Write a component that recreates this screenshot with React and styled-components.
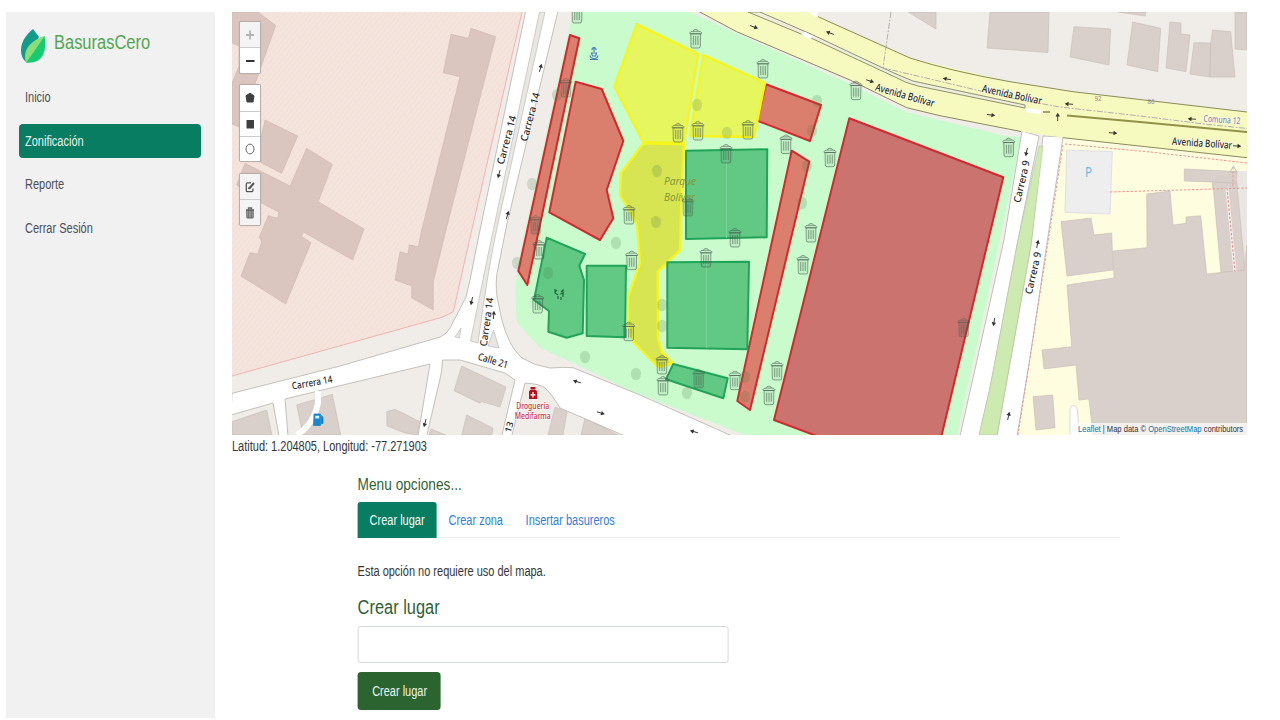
import React from "react";
import styled, { createGlobalStyle } from "styled-components";

const GlobalStyle = createGlobalStyle`
  * { box-sizing: border-box; }
  body {
    margin: 0;
    background: #fff;
    font-family: "Liberation Sans", Arial, sans-serif;
    overflow: hidden;
  }
`;

const Page = styled.div`
  display: flex;
  width: 1280px;
  height: 720px;
  padding: 12px 33px 2px 6px;
`;

const Sidebar = styled.aside`
  width: 209px;
  flex: none;
  height: 706px;
  background: #f1f1f1;
  padding: 16px 13px;
`;

const Brand = styled.div`
  display: flex;
  align-items: center;
  height: 36px;
  padding-left: 2px;
  gap: 8px;
`;

const BrandIcon = styled.svg`
  width: 25px;
  height: 36px;
  flex: none;
`;

const Narrow = styled.span`
  display: inline-block;
  white-space: nowrap;
  transform: scaleX(${(p) => p.$x || 0.785});
  transform-origin: ${(p) => p.$origin || "left"} center;
`;

const BrandName = styled.div`
  font-size: 20px;
  line-height: 24px;
  color: #53a653;
  margin-top: -8px;
`;

const Nav = styled.nav`
  display: flex;
  flex-direction: column;
  gap: 9px;
  margin-top: 16px;
`;

const NavItem = styled.a`
  height: 34.7px;
  line-height: 35px;
  padding-left: 6px;
  width: 182px;
  border-radius: 4px;
  font-size: 14px;
  color: ${(p) => (p.$active ? "#e9f5f1" : "#4c4f56")};
  background: ${(p) => (p.$active ? "#087d62" : "transparent")};
`;

const Main = styled.main`
  padding-left: 17px;
  width: 1032px;
`;

const MapFrame = styled.section`
  position: relative;
  width: 1015px;
  height: 423px;
  overflow: hidden;
`;

const MapCanvas = styled.svg`
  display: block;
  width: 1015px;
  height: 423px;
`;

const Controls = styled.div`
  position: absolute;
  left: 7px;
  top: 9px;
  display: flex;
  flex-direction: column;
  gap: 10.5px;
`;

const ControlGroup = styled.div`
  width: 22px;
  border: 1px solid #b9aeaa;
  border-radius: 2px;
  overflow: hidden;
  box-shadow: 0 0 1px rgba(0, 0, 0, 0.25);
`;

const ControlButton = styled.div`
  height: 25.4px;
  display: flex;
  align-items: center;
  justify-content: center;
  background: ${(p) => (p.$disabled ? "#f5f4f4" : "#fff")};
  & + & { border-top: 1px solid #ccc; }
  svg { width: 14px; height: 16px; display: block; }
`;

const Attribution = styled.div`
  position: absolute;
  right: 0;
  bottom: 0;
  width: 171px;
  height: 12px;
  line-height: 12px;
  padding-left: 2px;
  font-size: 9px;
  color: #333;
  background: rgba(255, 255, 255, 0.7);
  b { font-weight: 400; color: #0a78a8; }
`;

const Coordinates = styled.div`
  font-size: 14px;
  line-height: 20px;
  color: #33373b;
  margin-top: 1px;
`;

const Options = styled.section`
  margin: 18px 0 0 126.4px;
  width: 762px;
  transform: translateX(-0.4px);
`;

const MenuTitle = styled.h2`
  margin: 0;
  font-size: 17px;
  font-weight: 400;
  line-height: 22px;
  color: #34623a;
`;

const Tabs = styled.div`
  display: flex;
  height: 36px;
  margin-top: 6px;
  border-bottom: 1px solid #e8ebe8;
`;

const Tab = styled.div`
  width: ${(p) => p.$w}px;
  height: 36px;
  padding-left: 11.8px;
  line-height: 36px;
  font-size: 14px;
  border-radius: 3px 3px 0 0;
  color: ${(p) => (p.$active ? "#f1fbf7" : "#2f7fe0")};
  background: ${(p) => (p.$active ? "#087d62" : "transparent")};
`;

const Hint = styled.p`
  margin: 23px 0 0;
  font-size: 14px;
  line-height: 20px;
  color: #33373b;
`;

const FormTitle = styled.h3`
  margin: 14px 0 0;
  font-size: 20px;
  font-weight: 400;
  line-height: 24px;
  color: #2f6135;
`;

const Field = styled.input`
  display: block;
  width: 371px;
  height: 37px;
  margin-top: 7px;
  border: 1px solid #d5d8dc;
  border-radius: 3px;
  background: #fff;
`;

const Submit = styled.button`
  display: flex;
  align-items: center;
  justify-content: center;
  width: 82.5px;
  height: 38px;
  margin-top: 9px;
  padding: 0;
  border: 0;
  border-radius: 3.5px;
  background: #2c642f;
  color: #edf5ed;
  font-family: inherit;
  font-size: 14px;
`;

const campusBuildings = [
  "232,12 258,12 275.7,25.5 255,84 247,130 232,124 232,83 239,66 239,46 232,43",
  "265,120 297.7,136 281.7,173.3 256,160",
  "306.7,148.3 332.3,164.3 318.3,201.7 364,229 352.7,260 303.5,232 301.5,236.5 311,242.7 285.7,304 241,276 250,252.7 257.7,254 261.7,241.7 259.3,236.7 268.3,215.7 277.7,218.3 279,212.3 261.7,203 236.7,185 245,163.3 290,186",
  "451,34.3 468.3,38.3 471,28.3 495.7,36.7 446,230 433.3,281.7 433.3,310 411.7,298 411.7,286 395,280 400,251.7 408,254 409.3,245 418.3,246.7 421.7,230 460,76.7 443.3,72.7",
];

const cityBuildings = [
  "232,421.7 266.7,410 272,435 232,435",
  "296.7,405 332.3,394.3 340.7,435 303,435",
  "386.7,411.7 395,409.3 420,421.7 417,435 405,433 387,426",
  "431,429 446,435 429,435",
  "461.7,366 506,387 500,407 481.7,401.7 480,403.3 454,390.7",
  "466.7,415 493,428 492,435 461.7,435",
  "555,407 567,412 563,435 548,435",
  "585,418 618,435 581,435",
  "908,12 936,12 936,29",
  "990,12 1049,12 1048,52.5 987,48",
  "1074,26.7 1110.7,29 1109,65 1070,57",
  "1118,12 1146,12 1145,16",
  "1132.7,22 1160.7,28.3 1157.7,71.7 1127,65",
  "1170,22 1181,23 1181,34 1190,35 1186,71.7 1166,68",
  "1194,42.7 1210.7,43 1210,77 1190,74",
  "1210.7,43 1212.7,30 1230.7,31.7 1235,77 1210,77",
  "1235,12 1247,12 1247,50 1235,49",
  "1184.3,169 1237,171.5 1237,188 1212.7,188 1212.7,182 1184.3,181",
  "1212.7,182 1237,183 1245,271.7 1221,273",
  "1146.7,194 1170,191 1173,225 1186,223.3 1186,217 1200.7,215.7 1206.7,274 1244,270 1247,245 1247,435 1093,435 1089,399 1079,400 1076,365 1044,369 1042,350 1071.7,346.7 1067,285 1114,278 1113,251 1147,247.7",
  "1061,221.7 1091,218 1094,235 1111.7,233 1113,270 1067,276",
  "1033,396.7 1052.7,395 1055,427.7 1036,430",
];

const zones = {
  red: [
    "570,35 579.3,38.3 527.3,285 518.3,271",
    "575.7,81.7 601.7,89 623.3,141 606.7,190 613.3,218.3 600,240 549.3,212.3",
    "766,84.3 821,105 810,141 757.3,120.7",
    "791.7,150.7 809.3,161.7 750,410 737.3,401",
  ],
  deepRed: ["849.3,118.3 1003.3,177.3 941,438 822,438 774,420"],
  yellow: [
    "636.7,24.3 698.3,54 684,143.3 643.3,142.3 614.3,86.7",
    "703.3,55 765,83 754,137 690,136",
  ],
  olive: [
    "643.3,143.3 684,144.3 681.7,190 680,250 657.7,271.7 658,338 662,352 673,363 658,367 633,341.7 628,325 628,297 640,263 637,225 630,212 620,195 621,173",
  ],
  green: [
    "686,150.7 767.3,149.3 766.7,237.3 686,239",
    "667.3,262.3 749,261.7 747.3,349.3 667.3,347.7",
    "546.7,237.7 585,254 579.3,265.7 584,280 582.7,333.3 566.7,337.7 548.3,331.7 549,311 534,300",
    "586.7,265.7 626,265.7 625,337.3 586.7,336",
    "673.3,364 727.7,378.3 723.3,398.3 666,379.3",
  ],
};

const zoneStyle = {
  red: { fill: "#da7f6d", stroke: "#d5282e", strokeWidth: 2 },
  deepRed: { fill: "#cb736f", stroke: "#d5282e", strokeWidth: 2 },
  yellow: { fill: "#e6f65e", stroke: "#f6f51c", strokeWidth: 2.4 },
  olive: { fill: "#d8e552", stroke: "#f6f51c", strokeWidth: 2.4 },
  green: { fill: "#62c984", stroke: "#21a45a", strokeWidth: 2 },
};

const bins = [
  [577, 14], [695.7, 39], [763, 69], [678, 133], [698, 131], [748, 130],
  [629, 215], [631.7, 260.7], [706, 258], [537.7, 304], [628.7, 331.7],
  [662, 365], [663, 386], [735, 380.7], [856, 90.7], [786, 144.5],
  [830, 157.7], [811, 233], [803, 265], [777, 371], [769, 395.7],
  [1008.7, 147.7], [726, 154], [539, 250], [735, 238],
];
const shadedBins = [[566, 88], [535.7, 225], [688, 207], [698.7, 379], [963.7, 327.7]];

const trees = [
  [557, 95], [532, 184], [657, 171], [656, 222], [616, 243], [697, 105],
  [727, 133], [548, 273], [517, 263], [585, 357], [636, 374], [687, 393],
  [662, 305], [662, 326], [745, 377], [745, 397], [817, 101], [812, 131],
  [807, 166], [802, 203],
];

const arrows = [
  [754, 27, 20], [830, 33, 200], [870, 81, 18], [947, 79, 190], [991, 115, 8],
  [1069, 104, 185], [1057.7, 117, -90], [1113, 133, 4], [1192, 119, 184],
  [1237, 146, 3], [1026.5, 152, 102], [1037.5, 244, -78], [994, 322, 100],
  [1008.5, 416, -78], [499, 174, 105], [540.5, 68, -75], [507.5, 215, -75],
  [471.7, 301, 102], [493.7, 315, -85], [425, 423, 105], [577, 381.7, 195],
  [600.7, 413, 18], [694, 431.7, 195],
];

const streets = [
  ["Carrera 14", 506.5, 140, -75, 50, 10],
  ["Carrera 14", 530, 117, -75, 50, 10],
  ["Carrera 14", 486.5, 322, -82, 49, 10],
  ["Carrera 14", 312, 382.5, -10, 41, 10],
  ["Calle 21", 493, 360.5, 17, 31, 10],
  ["13", 509, 427, -72, 11, 9],
  ["Avenida Bolívar", 905, 95, 16, 61, 10.5],
  ["Avenida Bolívar", 1012, 94.5, 12, 61, 10.5],
  ["Avenida Bolívar", 1202, 143, 4, 60, 10.5],
  ["Carrera 9", 1021.5, 181.5, -77, 43, 10],
  ["Carrera 9", 1033, 273, -77, 43, 10],
];

const SQUEEZE = 0.78;

function MapLabel({ text, x, y, angle = 0, length, size, color = "#2b2b2b", halo = 0, italic }) {
  return (
    <text
      transform={`translate(${x} ${y}) rotate(${angle}) scale(${SQUEEZE} 1)`}
      textAnchor="middle"
      dy={size * 0.36}
      textLength={length / SQUEEZE}
      lengthAdjust="spacingAndGlyphs"
      fontFamily='"Noto Sans", sans-serif'
      fontSize={size}
      fontWeight={halo ? 500 : 400}
      fontStyle={italic ? "italic" : "normal"}
      fill={color}
      stroke="#fff"
      strokeOpacity="0.6"
      strokeWidth={halo}
      paintOrder="stroke"
    >
      {text}
    </text>
  );
}

function Bin({ x, y, shaded }) {
  return (
    <g
      transform={`translate(${x} ${y})`}
      stroke="#46584c"
      strokeOpacity={shaded ? 0.32 : 0.55}
      strokeWidth="1"
      fill="#46584c"
      fillOpacity={shaded ? 0.22 : 0.08}
    >
      <path d="M-4.9-5.2 -4.7 7.2Q-4.7 9-3 9H3Q4.7 9 4.7 7.2L4.9-5.2Z" />
      <path d="M-5.8-5.2V-6.4Q-5.6-7.4-3-7.7H3Q5.6-7.4 5.8-6.4V-5.2Z" />
      <path d="M-2.5-7.8Q-2.2-9.5 0-9.5T2.5-7.8" fill="none" />
      <path d="M-2.3-3V6M0-3V6M2.3-3V6" fill="none" />
    </g>
  );
}

function CityMap() {
  return (
    <MapCanvas viewBox="232 12 1015 423">
      <defs>
        <pattern id="hatch" width="4" height="4" patternUnits="userSpaceOnUse" patternTransform="rotate(40)">
          <rect width="4" height="4" fill="#f3e1da" />
          <path d="M0 0V4" stroke="#f8eae4" strokeWidth="1.4" />
        </pattern>
      </defs>
      <rect x="232" y="12" width="1015" height="423" fill="#f0ede8" />
      <polygon points="232,12 522,12 471.5,231 453.3,311.7 443,317 232,376" fill="url(#hatch)" />
      <path d="M522 12 471.5 231 453.3 311.7 443 317 232 376" fill="none" stroke="#f0b4b0" />
      <g fill="#dbc5bf" stroke="#cfb6b0" strokeWidth="0.6">
        {campusBuildings.map((p) => <polygon key={p} points={p} />)}
      </g>

      <polygon points="573,12 690,12 740,35 850,84 906,112 1006,136 1021,137 1003,225 957,435 745,435 633,392 573,363 540,348 517,323 515,292 518,262" fill="#c9fbcd" />
      <polygon points="1063,138 1247,158 1247,435 1017,435 1030,358 1046,245" fill="#fefde0" />
      <polygon points="1237,171 1247,171 1247,245 1244,270" fill="#e9e6e4" />
      <polygon points="1066.7,150 1112.3,151.7 1110,214 1065,212.3" fill="#eeeeee" stroke="#d9d9e4" strokeWidth="0.8" />

      <g fill="#d9d0cb" stroke="#c6bab4" strokeWidth="0.6">
        {cityBuildings.map((p) => <polygon key={p} points={p} />)}
      </g>
      <path d="M1070 435V409Q1071 405 1074 405.500T1077.500 410L1079 435" fill="#fff" stroke="#ccc" strokeWidth="0.7" />

      <g fill="#fff" stroke="#bdbab6" strokeWidth="0.9">
        <path d="M232 393.300 340 366 440 337Q447 334 450 328L466 297 470 280 480 230 525.700 11H558L506.700 225 496.700 275Q495 292 499 306 502 324 507 335 512 349 522 358 535 366 550 368 563 367 573 367.700L640 395 732 436H625L560 408Q551 393 545 388 541 384 525 383L511.700 436H501.700L515 380 505 373 460 360H442.500Q442 372 440 379L426.700 436H418L430 364 285 399 288 436H279L273 403 231 415Z" />
        <path d="M1022 131 1004 240 960 436H979L990 388 1018 240 1039 136Z" />
        <path d="M1043 136 1031 245 997 436H1017L1030 358 1046.700 245 1063 137Z" />
      </g>
      <path d="M539.500 12H545L497 228Q487 275 478 343L470.500 341 488 255Z" fill="#e9e7e2" stroke="#bfbcb7" strokeWidth="0.7" />
      <path d="M488 346 493.500 330 499 348ZM455 337 461 328 459.500 338Z" fill="#e8e6e2" stroke="#bbb" strokeWidth="0.7" />
      <path d="M318 391V403Q314 424 297 435" fill="none" stroke="#fff" strokeWidth="6" />
      <polygon points="1039,146 1043,146 1031,245 997,435 979,435 990,388 1018,240" fill="#cdebb0" stroke="#b5c6a0" strokeWidth="0.6" />

      <path d="M698 11 736.700 31.700 850 80 906.700 107.700Q923 112 940 115.700L1010 130 1063 137.700 1247 157.700V112L1073 91.700 1010 81.700 910 58 818 16.700 806 11Z" fill="#f7fabf" />
      <path d="M698 11 736.700 31.700 850 80 906.700 107.700 940 115.700 1021 131.500M1063 137.700 1247 157.700M1247 112 1073 91.700 1010 81.700Q950 71 910 58L818 16.700" fill="none" stroke="#8b8b5a" strokeWidth="1" />
      <path d="M748 12 812 38.500 895 77Q905 83 918 86L1025 108 1025 105 913 81Q900 76 883 68L812 34.500 760 12Z" fill="#eeeedb" stroke="#84846a" strokeWidth="0.9" />
      <path d="M1067 115.500 1140 122 1247 132" fill="none" stroke="#929149" strokeWidth="1.800" />
      <path d="M891 12 883 68 905 73 1010 98 1060 107 1140 116 1200 123.500 1247 128.500" fill="none" stroke="#aaa5ac" strokeWidth="0.9" strokeDasharray="6 1.500 2 1.500" />
      <path d="M801 34 805 32 813 36 810 40ZM808 12H818L816 17ZM1026 108 1042 110 1040 114 1026 112Z" fill="#fff" />
      <path d="M1043 112H1050" stroke="#a7a76c" strokeWidth="2" />

      <g fill="none" stroke="#e69a94" strokeWidth="1" strokeDasharray="2.500 1.600">
        <path d="M1065 144 1150 152 1247 163M1063 145 1046 255 1018 435M1110 192 1180 190 1247 188" />
        <path d="M1233 167V188" />
      </g>
      <path d="M1227 188 1235 272" stroke="#f6efee" strokeWidth="3" />
      <path d="M1227 188 1235 272" stroke="#df9690" strokeWidth="1.200" strokeDasharray="2.500 1.600" />
      <path d="M1230 172H1237L1233.500 166Z" fill="none" stroke="#c2b5b0" strokeWidth="0.8" />

      {Object.entries(zones).map(([kind, shapes]) =>
        shapes.map((p) => <polygon key={p} points={p} {...zoneStyle[kind]} strokeLinejoin="round" />)
      )}
      <path d="M726.500 151V238M706.500 263V348" stroke="#7fd49b" strokeWidth="0.8" />

      <g fill="#4a7a45" fillOpacity="0.2">
        {trees.map(([x, y]) => <ellipse key={`${x}-${y}`} cx={x} cy={y} rx="5" ry="6.200" />)}
      </g>
      <MapLabel text="Parque" x={680} y={181.5} length={32} size={11} color="#83973a" italic />
      <MapLabel text="Bolívar" x={679.5} y={197} length={31} size={11} color="#83973a" italic />
      {bins.map(([x, y]) => <Bin key={`${x}-${y}`} x={x} y={y} />)}
      {shadedBins.map(([x, y]) => <Bin key={`${x}-${y}`} x={x} y={y} shaded />)}

      {arrows.map(([x, y, a]) => (
        <g key={`${x}-${y}`} transform={`translate(${x} ${y}) rotate(${a})`} fill="#333" stroke="#333">
          <path d="M-4 0H2" strokeWidth="0.9" />
          <path d="M0.500-2.200 4.300 0 0.500 2.200Z" stroke="none" />
        </g>
      ))}
      {streets.map(([t, x, y, a, l, s]) => (
        <MapLabel key={`${x}-${y}`} text={t} x={x} y={y} angle={a} length={l} size={s} halo={1.5} />
      ))}
      <MapLabel text="Comuna 12" x={1222} y={119.5} angle={4} length={37} size={9.5} color="#8f87ac" halo={1.5} />
      <MapLabel text="92" x={1098} y={98} length={7} size={8} color="#8f8b96" />
      <MapLabel text="86" x={1151} y={101} length={7} size={8} color="#8f8b96" />
      <MapLabel text="P" x={1088.5} y={172} length={7} size={14} color="#74b9dc" />
      <MapLabel text="Droguería" x={532.7} y={406} length={33} size={8.5} color="#cf3340" halo={1.5} />
      <MapLabel text="Medifarma" x={532.7} y={415.5} length={36} size={8.5} color="#cf3340" halo={1.5} />

      <path d="M530.500 387H535.500V389.500H530.500ZM530 390H536L537 391.500V399H529V391.500Z" fill="#b8101f" />
      <path d="M533 392V397.500M530.500 394.800H535.500" stroke="#fff" strokeWidth="1.200" />
      <path d="M314 414H320.500V425.500H313.500ZM321 415.500 323 417V423.500H321" fill="#1687cf" stroke="#1687cf" strokeWidth="0.8" />
      <path d="M315.200 415.800H319.200V418.500H315.200Z" fill="#d9effb" />
      <g fill="none" stroke="#4a7fbd" strokeWidth="1.200">
        <path d="M594 47.500V52M592 50Q592 47.500 594 47.500 596 47.500 596 50M591.500 53H596.500L595.500 56H592.500ZM590 55.500Q590.500 58.500 594 58.500T598 55.500M590 59.500H598" />
      </g>
      <path d="M555 289V293L558 295M555 292 557 290M558 296V299M561 292 563 290V297M560 294 564 293M561 297V300" fill="none" stroke="#24673b" strokeWidth="1.200" />
    </MapCanvas>
  );
}

const icons = {
  plus: <path d="M7 3.500V12.500M3 8H11" stroke="#b4b4b4" strokeWidth="1.800" />,
  minus: <path d="M3 8H11.500" stroke="#333" strokeWidth="2" />,
  polygon: <path d="M7 3.200 11 5.800 10 12H4L3 5.800Z" fill="#404040" stroke="#404040" strokeLinejoin="round" />,
  square: <rect x="3.500" y="4" width="7.500" height="8.500" fill="#404040" />,
  circle: <ellipse cx="7" cy="8" rx="4" ry="4.900" fill="none" stroke="#666" strokeWidth="1" />,
  edit: (
    <g fill="none" stroke="#555" strokeWidth="1.300">
      <path d="M8 3.800H4.500Q3.300 3.800 3.300 5V11.500Q3.300 12.700 4.500 12.700H8.700Q9.900 12.700 9.900 11.500V9.500" />
      <path d="M6.200 9.500 11 4M6 10.200 6.300 8.300" strokeWidth="2" />
    </g>
  ),
  trash: (
    <g fill="none" stroke="#666">
      <path d="M3.800 5.500H10.200V12Q10.200 13 9.200 13H4.800Q3.800 13 3.800 12ZM5.800 6V12.500M8.200 6V12.500" fill="#aaa" strokeWidth="1.100" />
      <path d="M3 5H11M5.500 4.500V3H8.500V4.500" strokeWidth="1.300" />
    </g>
  ),
};

const controlGroups = [["plus", "minus"], ["polygon", "square", "circle"], ["edit", "trash"]];
const dimmed = ["plus", "edit", "trash"];
const menu = ["Inicio", "Zonificación", "Reporte", "Cerrar Sesión"];
const tabs = [["Crear lugar", 78.5], ["Crear zona", 77.3], ["Insertar basureros", 120]];

export default function App() {
  return (
    <>
      <GlobalStyle />
      <Page>
        <Sidebar>
          <Brand>
            <BrandIcon viewBox="0 0 25 36">
              <path d="M12 1C6 6 0 13 0 22Q0 30 5 34L18 9Q15 5 12 1Z" fill="#109b8b" />
              <path d="M23.500 8C14 11 4 18 4 28Q4 32 5 34.700L9 33C17 28 23 20 23.500 8Z" fill="#8bdd78" />
              <path d="M23.500 8Q25.500 20 22 27 17 36 5 34.700 13 24 23.500 8Z" fill="#15cb74" />
            </BrandIcon>
            <BrandName><Narrow $x={0.823}>BasurasCero</Narrow></BrandName>
          </Brand>
          <Nav>
            {menu.map((m) => (
              <NavItem key={m} $active={m === "Zonificación"}><Narrow>{m}</Narrow></NavItem>
            ))}
          </Nav>
        </Sidebar>
        <Main>
          <MapFrame>
            <CityMap />
            <Controls>
              {controlGroups.map((g) => (
                <ControlGroup key={g[0]}>
                  {g.map((name) => (
                    <ControlButton key={name} $disabled={dimmed.includes(name)}>
                      <svg viewBox="0 0 14 16">{icons[name]}</svg>
                    </ControlButton>
                  ))}
                </ControlGroup>
              ))}
            </Controls>
            <Attribution>
              <Narrow $x={0.84}><b>Leaflet</b> | Map data © <b>OpenStreetMap</b> contributors</Narrow>
            </Attribution>
          </MapFrame>
          <Coordinates><Narrow>Latitud: 1.204805, Longitud: -77.271903</Narrow></Coordinates>
          <Options>
            <MenuTitle><Narrow $x={0.805}>Menu opciones...</Narrow></MenuTitle>
            <Tabs>
              {tabs.map(([t, w], i) => (
                <Tab key={t} $w={w} $active={i === 0}><Narrow>{t}</Narrow></Tab>
              ))}
            </Tabs>
            <Hint><Narrow>Esta opción no requiere uso del mapa.</Narrow></Hint>
            <FormTitle><Narrow $x={0.82}>Crear lugar</Narrow></FormTitle>
            <Field />
            <Submit><Narrow $origin="center">Crear lugar</Narrow></Submit>
          </Options>
        </Main>
      </Page>
    </>
  );
}
